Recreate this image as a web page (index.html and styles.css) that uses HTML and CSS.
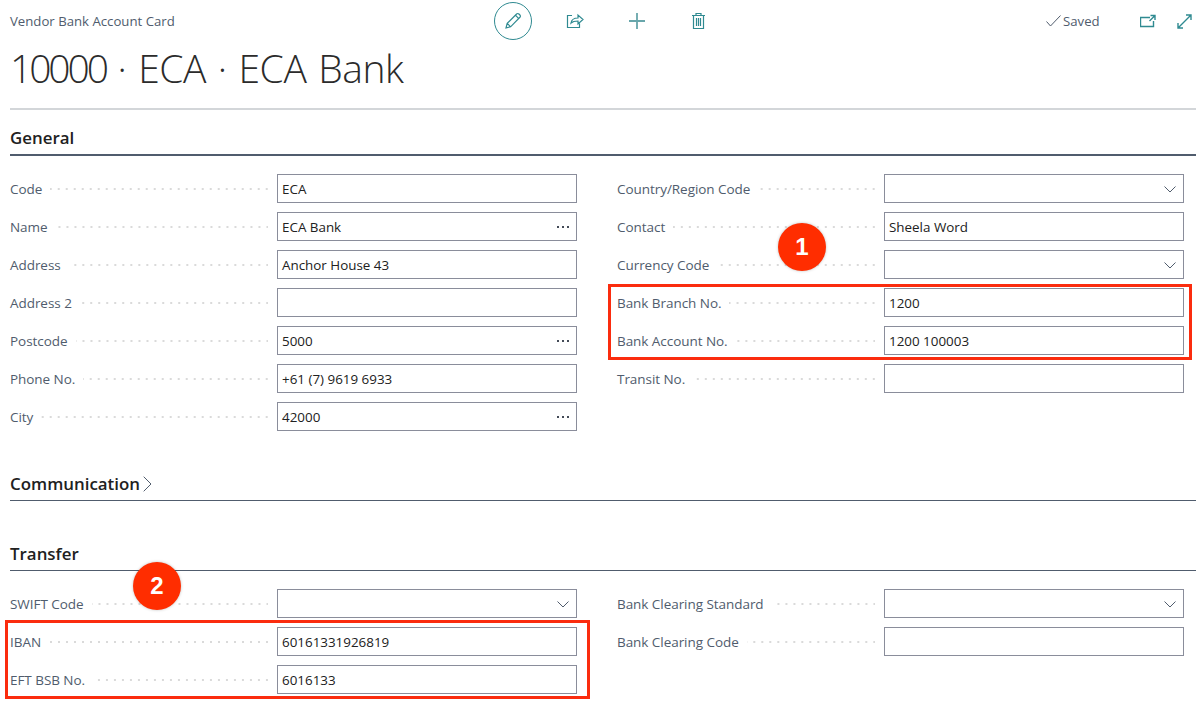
FILE: index.html
```html
<!DOCTYPE html>
<html lang="en">
<head>
<meta charset="utf-8">
<title>Vendor Bank Account Card</title>
<link rel="stylesheet" href="styles.css">
</head>
<body>
<div class="page">
  <header class="topbar">
    <div class="crumb">Vendor Bank Account Card</div>
    <div class="actions">
      <span class="act act-edit"><svg width="18" height="18" viewBox="0 0 18 18"><path d="M2 16l1.200-4.600L12.600 2a1.600 1.600 0 0 1 2.300 0l1 1a1.600 1.600 0 0 1 0 2.300L6.600 14.800z M3.200 11.400l3.400 3.400 M11.400 3.200l3.400 3.400" /></svg></span>
      <span class="act"><svg width="18" height="18" viewBox="0 0 18 18"><path d="M6 3.500H1.500v12h12V11.500 M5 11c.5-3.200 3-5 7-5V3l5 4.500-5 4.500V9c-3 0-5.300.4-7 2z"/></svg></span>
      <span class="act"><svg class="plus" width="18" height="18" viewBox="0 0 18 18"><path d="M9 1v16M1 9h16"/></svg></span>
      <span class="act"><svg width="18" height="18" viewBox="0 0 18 18"><path d="M2 3.500h13M6 3.500V1.500h5v2M3.500 3.500v13h10v-13M6.500 6v8M8.500 6v8M10.500 6v8"/></svg></span>
    </div>
    <div class="status">
      <svg class="check" width="15" height="12" viewBox="0 0 15 12"><path d="M.5 6.500l4 4.500L14.500.5"/></svg>
      <span class="saved">Saved</span>
      <svg class="win pop" width="17" height="14" viewBox="0 0 17 14"><path d="M10 3.500H.5v9h13V7 M10.500 1.500h4.500v4.500 M15 1.500l-5.500 5.500"/></svg>
      <svg class="win" width="15" height="15" viewBox="0 0 15 15"><path d="M1 14L14 1M9 1h5v5M1 9v5h5"/></svg>
    </div>
  </header>
  <h1 class="title"><span class="title-num">10000</span> · ECA · ECA Bank</h1>
  <div class="title-rule"></div>

  <section class="section general">
    <h2 class="sec-head thick">General</h2>
    <div class="grid">
      <div class="col">
        <div class="row"><span class="lbl">Code</span><span class="dots"></span><span class="inp">ECA</span></div>
        <div class="row"><span class="lbl">Name</span><span class="dots"></span><span class="inp">ECA Bank<i class="more"></i></span></div>
        <div class="row"><span class="lbl">Address</span><span class="dots"></span><span class="inp">Anchor House 43</span></div>
        <div class="row"><span class="lbl">Address 2</span><span class="dots"></span><span class="inp"></span></div>
        <div class="row"><span class="lbl">Postcode</span><span class="dots"></span><span class="inp">5000<i class="more"></i></span></div>
        <div class="row"><span class="lbl">Phone No.</span><span class="dots"></span><span class="inp">+61 (7) 9619 6933</span></div>
        <div class="row"><span class="lbl">City</span><span class="dots"></span><span class="inp">42000<i class="more"></i></span></div>
      </div>
      <div class="col">
        <div class="row"><span class="lbl">Country/Region Code</span><span class="dots"></span><span class="inp"><svg class="chev" width="12" height="7" viewBox="0 0 12 7"><path d="M.5.5L6 6l5.500-5.500"/></svg></span></div>
        <div class="row"><span class="lbl">Contact</span><span class="dots"></span><span class="inp">Sheela Word</span></div>
        <div class="row"><span class="lbl">Currency Code</span><span class="dots"></span><span class="inp"><svg class="chev" width="12" height="7" viewBox="0 0 12 7"><path d="M.5.5L6 6l5.500-5.500"/></svg></span></div>
        <div class="row"><span class="lbl">Bank Branch No.</span><span class="dots"></span><span class="inp">1200</span></div>
        <div class="row"><span class="lbl">Bank Account No.</span><span class="dots"></span><span class="inp">1200 100003</span></div>
        <div class="row"><span class="lbl">Transit No.</span><span class="dots"></span><span class="inp"></span></div>
      </div>
    </div>
  </section>

  <section class="section communication">
    <h2 class="sec-head">Communication<svg class="sec-chev" width="9" height="16" viewBox="0 0 9 16"><path d="M.7.7L8 8 .7 15.300"/></svg></h2>
  </section>

  <section class="section transfer">
    <h2 class="sec-head">Transfer</h2>
    <div class="grid">
      <div class="col">
        <div class="row"><span class="lbl">SWIFT Code</span><span class="dots"></span><span class="inp"><svg class="chev" width="12" height="7" viewBox="0 0 12 7"><path d="M.5.5L6 6l5.500-5.500"/></svg></span></div>
        <div class="row"><span class="lbl">IBAN</span><span class="dots"></span><span class="inp">60161331926819</span></div>
        <div class="row"><span class="lbl">EFT BSB No.</span><span class="dots"></span><span class="inp">6016133</span></div>
      </div>
      <div class="col">
        <div class="row"><span class="lbl">Bank Clearing Standard</span><span class="dots"></span><span class="inp"><svg class="chev" width="12" height="7" viewBox="0 0 12 7"><path d="M.5.5L6 6l5.500-5.500"/></svg></span></div>
        <div class="row"><span class="lbl">Bank Clearing Code</span><span class="dots"></span><span class="inp"></span></div>
      </div>
    </div>
  </section>

  <div class="mark mark-1"></div>
  <div class="mark mark-2"></div>
  <div class="badge badge-1">1</div>
  <div class="badge badge-2">2</div>
</div>
</body>
</html>
```

FILE: styles.css
```css
* { box-sizing: border-box; }
html, body { margin: 0; padding: 0; background: #fff; }
body { font-family: "Open Sans", "Noto Sans", sans-serif; color: #212121; overflow: hidden; }
.page { position: relative; width: 1196px; height: 726px; padding: 0 0 0 10px; overflow: hidden; }

.topbar { display: flex; align-items: center; height: 42px; position: relative; }
.crumb { width: 484px; font-size: 13.2px; color: #505c6d; }
.actions { display: flex; align-items: center; }
.act { display: flex; align-items: center; justify-content: center; width: 38px; height: 38px; margin-right: 24px; }
.act svg { fill: none; stroke: #2f8a91; stroke-width: 1.2; }
.act .plus { stroke: #68a6ab; stroke-width: 1.8; }
.act-edit { border: 1px solid #2f8a91; border-radius: 50%; }
.status { display: flex; align-items: center; margin-left: auto; padding-right: 4px; }
.check { fill: none; stroke: #505c6d; stroke-width: 1; margin-right: 2px; }
.saved { font-size: 13.2px; color: #505c6d; width: 38px; margin-right: 39px; }
.win { fill: none; stroke: #2f8a91; stroke-width: 1.4; }
.pop { margin-right: 20px; }

.title { margin: 2px 0 0; height: 50px; font-family: "Open Sans", sans-serif; font-weight: 300; font-size: 39px; line-height: 48px; letter-spacing: -.4px; word-spacing: 2px; color: #2b2b2b; }
.title-num { letter-spacing: -3.1px; }
.title-rule { height: 2px; margin-top: 14px; background: #d3d6d9; }

.section { width: 1186px; }
.general { margin-top: 17px; }
.communication { margin-top: 41px; }
.transfer { margin-top: 41px; }

.sec-head { display: flex; align-items: center; margin: 0; height: 29px; padding-bottom: 4px; font-size: 16.9px; font-weight: 600; line-height: 22px; color: #212121; border-bottom: 1px solid #505c6d; }
.sec-head.thick { padding-bottom: 6px; border-bottom-width: 2px; }
.sec-chev { margin-left: 3px; fill: none; stroke: #505c6d; stroke-width: 1; }

.grid { display: grid; grid-template-columns: 567px 567px; column-gap: 40px; padding-top: 18px; }
.col { display: flex; flex-direction: column; gap: 9px; }
.row { display: flex; align-items: center; height: 29px; }
.lbl { font-size: 13.5px; letter-spacing: -.05px; color: #505c6d; white-space: nowrap; }
.dots { flex: 1; height: 2px; margin: 1px 9px 0 8px; background-image: linear-gradient(to right, #dadada 2px, transparent 2px); background-size: 8px 2px; background-repeat: repeat-x; background-position: calc(100% + 6px) center; }
.inp { position: relative; display: flex; align-items: center; width: 300px; height: 29px; padding: 0 4px; border: 1px solid #8a8d9b; font-size: 13.4px; color: #212121; }
.more { position: absolute; right: 7px; top: 13px; width: 12px; height: 2px; background-image: linear-gradient(to right, #444b57 2px, transparent 2px); background-size: 5px 2px; background-repeat: repeat-x; }
.chev { position: absolute; right: 7px; top: 11px; fill: none; stroke: #505c6d; stroke-width: 1; }

.mark { position: absolute; border: 3px solid #fb2c0e; }
.mark-1 { left: 608px; top: 284px; width: 584px; height: 76px; }
.mark-2 { left: 5px; top: 620px; width: 585px; height: 79px; }
.badge { position: absolute; display: flex; align-items: center; justify-content: center; width: 48px; height: 48px; border-radius: 50%; background: #ff2d00; color: #fff; font-family: "Liberation Sans", sans-serif; font-size: 24px; font-weight: 700; box-shadow: 0 0 3px rgba(0,0,0,.25); }
.badge-1 { left: 778px; top: 223px; }
.badge-2 { left: 133px; top: 562px; }
```
